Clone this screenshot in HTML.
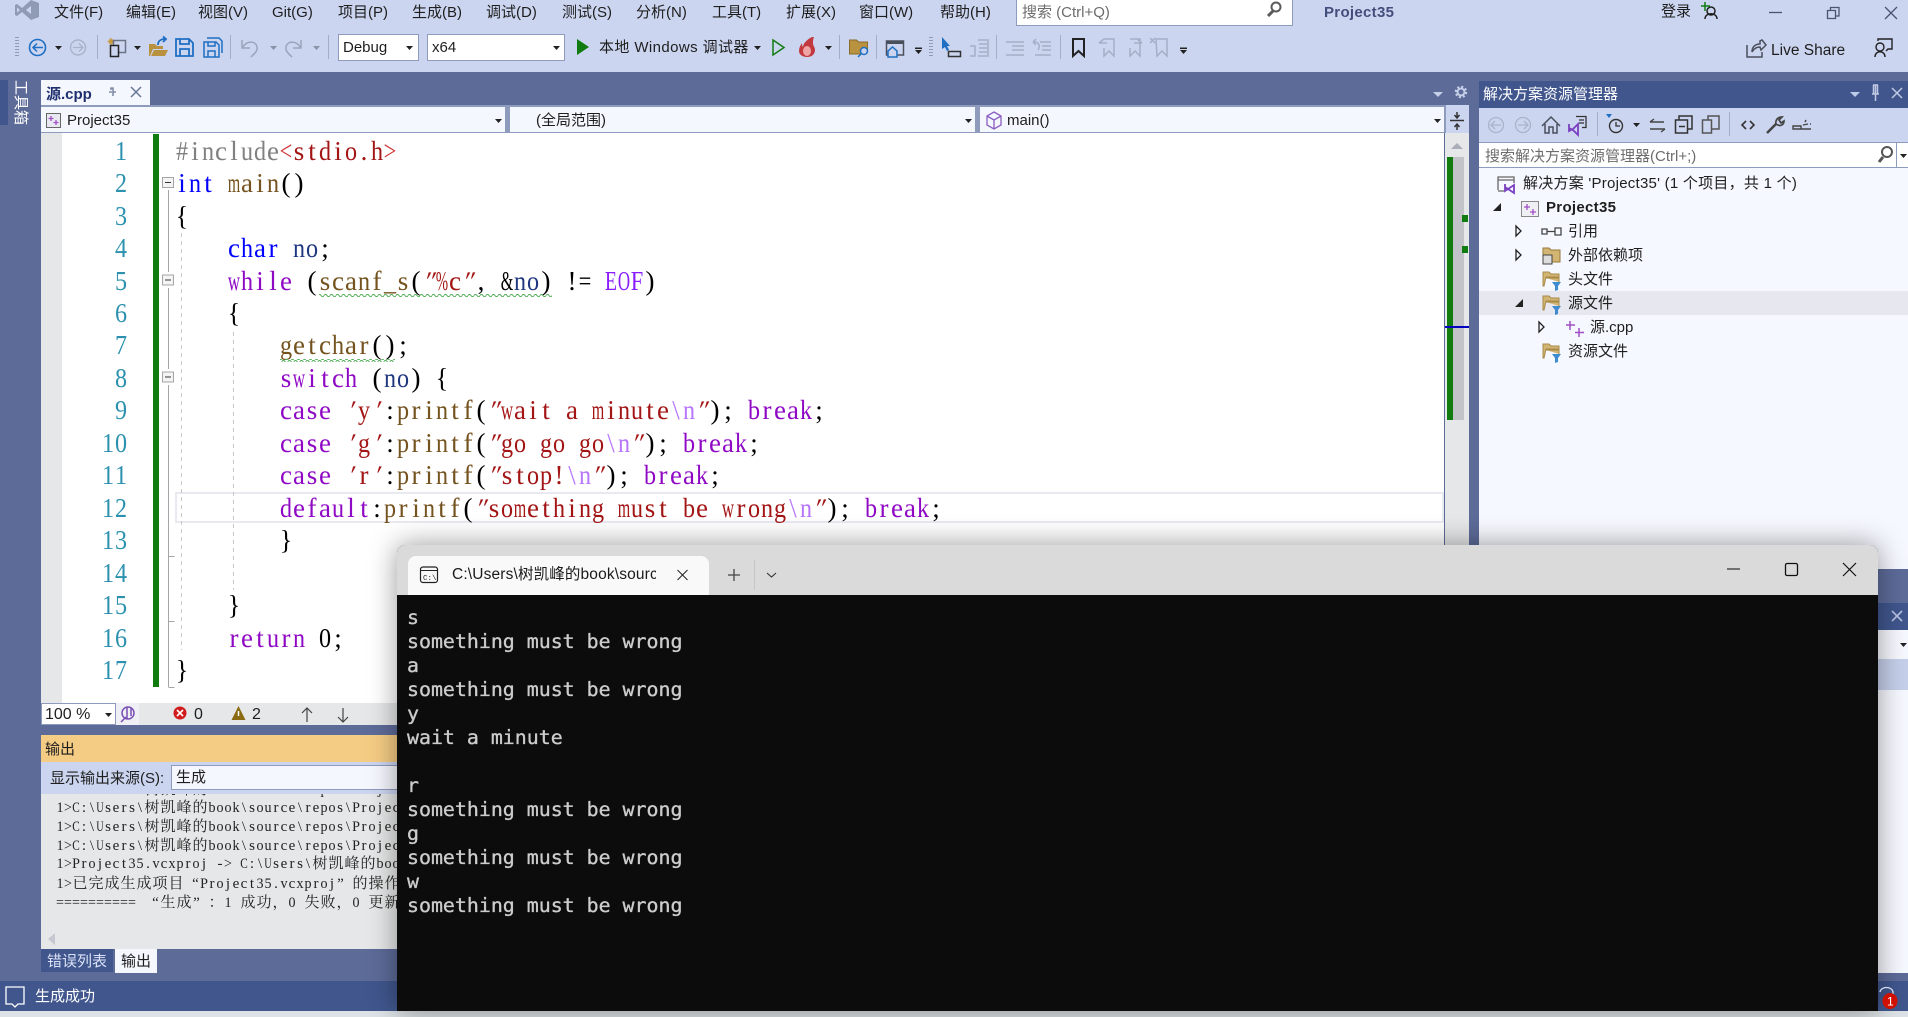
<!DOCTYPE html>
<html lang="zh"><head><meta charset="utf-8"><title>Project35</title>
<style>
html,body{margin:0;padding:0}
body{width:1908px;height:1017px;position:relative;overflow:hidden;background:#5d6b99;font:15px/20px "Liberation Sans","Noto Sans CJK SC",sans-serif;color:#1e1e1e}
.a{position:absolute}
.t{position:absolute;white-space:nowrap;line-height:20px;height:20px}
.code{position:absolute;white-space:pre;left:175.500px;height:32px;line-height:32px;font:27px/32px "Liberation Serif","Noto Serif CJK SC",serif;color:#000}
.ln{position:absolute;white-space:pre;height:32px;font:27px/32px "Liberation Serif",serif;color:#2b91af}
.o{position:absolute;left:56px;white-space:pre;height:19px;font:15px/19px "Liberation Serif","Noto Serif CJK SC",serif;color:#222}
.k{color:#0000ff}.p{color:#8f08c4}.f{color:#74531f}.s{color:#a31515}.e{color:#b776fb}.v{color:#1f377f}.g{color:#808080}.c{color:#8a1bff}.r{color:#d03030}
svg{position:absolute;left:0;top:0}
</style></head><body>

<!-- top bar -->
<div class="a" style="left:0;top:0;width:1908px;height:72px;background:#ccd5f0"></div>
<div class="t" style="left:54px;top:3px">文件(F)</div>
<div class="t" style="left:126px;top:3px">编辑(E)</div>
<div class="t" style="left:198px;top:3px">视图(V)</div>
<div class="t" style="left:272px;top:3px">Git(G)</div>
<div class="t" style="left:338px;top:3px">项目(P)</div>
<div class="t" style="left:412px;top:3px">生成(B)</div>
<div class="t" style="left:486px;top:3px">调试(D)</div>
<div class="t" style="left:562px;top:3px">测试(S)</div>
<div class="t" style="left:636px;top:3px">分析(N)</div>
<div class="t" style="left:712px;top:3px">工具(T)</div>
<div class="t" style="left:786px;top:3px">扩展(X)</div>
<div class="t" style="left:859px;top:3px">窗口(W)</div>
<div class="t" style="left:940px;top:3px">帮助(H)</div>
<div class="a" style="left:1016px;top:-1px;width:275px;height:25px;background:#fff;border:1px solid #8e9bbc"></div>
<div class="t" style="left:1022px;top:3px;color:#6d6d6d">搜索 (Ctrl+Q)</div>
<div class="t" style="left:1324px;top:3px;color:#444e7c;font-weight:bold;letter-spacing:.3px">Project35</div>
<div class="t" style="left:1661px;top:2px">登录</div>
<div class="a" style="left:338px;top:34px;width:79px;height:25px;background:#fff;border:1px solid #8e9bbc"></div>
<div class="t" style="left:343px;top:38px">Debug</div>
<div class="a" style="left:427px;top:34px;width:136px;height:25px;background:#fff;border:1px solid #8e9bbc"></div>
<div class="t" style="left:432px;top:38px">x64</div>
<div class="t" style="left:599px;top:38px;letter-spacing:.4px">本地 Windows 调试器</div>
<div class="t" style="left:1771px;top:41px;font-size:15.500px">Live Share</div>

<!-- tab -->
<div class="a" style="left:0;top:80px;width:8px;height:45px;background:#40568d"></div>
<div class="a" style="left:12px;top:80px;height:46px;width:16px;font-size:15px;line-height:16px;color:#fff;writing-mode:vertical-rl;text-orientation:sideways">工具箱</div>
<div class="a" style="left:41px;top:80px;width:109px;height:26px;background:#f5f7fe"></div>
<div class="t" style="left:46px;top:85px;font-weight:bold;color:#1e2f6f">源.cpp</div>

<!-- nav bar -->
<div class="a" style="left:41px;top:105px;width:1428px;height:28px;background:#8e9bbc"></div>
<div class="a" style="left:41px;top:107px;width:464px;height:25px;background:#f5f7fe"></div>
<div class="a" style="left:510px;top:107px;width:465px;height:25px;background:#f5f7fe"></div>
<div class="a" style="left:980px;top:107px;width:464px;height:25px;background:#f5f7fe"></div>
<div class="a" style="left:1446px;top:105px;width:23px;height:28px;background:#ccd5f0"></div>
<div class="t" style="left:67px;top:111px">Project35</div>
<div class="t" style="left:536px;top:111px">(全局范围)</div>
<div class="t" style="left:1007px;top:111px">main()</div>

<!-- editor -->
<div class="a" style="left:41px;top:133px;width:1403px;height:570px;background:#fff"></div>
<div class="a" style="left:41px;top:133px;width:21px;height:570px;background:#e6e7e8"></div>
<div class="a" style="left:153px;top:134px;width:6px;height:553px;background:#107c10"></div>
<div class="a" style="left:175px;top:492px;width:1265px;height:27px;border:2px solid #e9e9f2"></div>
<div class="a" style="left:1445px;top:133px;width:24px;height:420px;background:#e6e7e8"></div>
<div class="a" style="left:1453px;top:157px;width:11px;height:263px;background:#c2c3c9"></div>
<div class="a" style="left:1447px;top:157px;width:6px;height:263px;background:#107c10"></div>
<div class="a" style="left:1462px;top:215px;width:6px;height:7px;background:#107c10"></div>
<div class="a" style="left:1462px;top:246px;width:6px;height:7px;background:#107c10"></div>
<div class="a" style="left:1445px;top:326px;width:24px;height:2px;background:#0000c0"></div>

<div class="ln m13" style="left:114px;top:135px">1</div>
<div class="ln m13" style="left:114px;top:167px">2</div>
<div class="ln m13" style="left:114px;top:200px">3</div>
<div class="ln m13" style="left:114px;top:232px">4</div>
<div class="ln m13" style="left:114px;top:265px">5</div>
<div class="ln m13" style="left:114px;top:297px">6</div>
<div class="ln m13" style="left:114px;top:329px">7</div>
<div class="ln m13" style="left:114px;top:362px">8</div>
<div class="ln m13" style="left:114px;top:394px">9</div>
<div class="ln m13" style="left:101px;top:427px">10</div>
<div class="ln m13" style="left:101px;top:459px">11</div>
<div class="ln m13" style="left:101px;top:492px">12</div>
<div class="ln m13" style="left:101px;top:524px">13</div>
<div class="ln m13" style="left:101px;top:557px">14</div>
<div class="ln m13" style="left:101px;top:589px">15</div>
<div class="ln m13" style="left:101px;top:622px">16</div>
<div class="ln m13" style="left:101px;top:654px">17</div>

<div class="code m13" style="top:135px"><span class="g">#include</span><span class="r">&lt;</span><span class="s">stdio.h</span><span class="r">&gt;</span></div>
<div class="code m13" style="top:167px"><span class="k">int</span> <span class="f">main</span>()</div>
<div class="code m13" style="top:200px">{</div>
<div class="code m13" style="top:232px">    <span class="k">char</span> <span class="v">no</span>;</div>
<div class="code m13" style="top:265px">    <span class="p">while</span> (<span class="f">scanf_s</span>(<span class="s">"%c"</span>, &amp;<span class="v">no</span>) != <span class="c">EOF</span>)</div>
<div class="code m13" style="top:297px">    {</div>
<div class="code m13" style="top:329px">        <span class="f">getchar</span>();</div>
<div class="code m13" style="top:362px">        <span class="p">switch</span> (<span class="v">no</span>) {</div>
<div class="code m13" style="top:394px">        <span class="p">case</span> <span class="s">'y'</span>:<span class="f">printf</span>(<span class="s">"wait a minute</span><span class="e">\n</span><span class="s">"</span>); <span class="p">break</span>;</div>
<div class="code m13" style="top:427px">        <span class="p">case</span> <span class="s">'g'</span>:<span class="f">printf</span>(<span class="s">"go go go</span><span class="e">\n</span><span class="s">"</span>); <span class="p">break</span>;</div>
<div class="code m13" style="top:459px">        <span class="p">case</span> <span class="s">'r'</span>:<span class="f">printf</span>(<span class="s">"stop!</span><span class="e">\n</span><span class="s">"</span>); <span class="p">break</span>;</div>
<div class="code m13" style="top:492px">        <span class="p">default</span>:<span class="f">printf</span>(<span class="s">"something must be wrong</span><span class="e">\n</span><span class="s">"</span>); <span class="p">break</span>;</div>
<div class="code m13" style="top:524px">        }</div>
<div class="code m13" style="top:589px">    }</div>
<div class="code m13" style="top:622px">    <span class="p">return</span> 0;</div>
<div class="code m13" style="top:654px">}</div>

<!-- editor bottom bar -->
<div class="a" style="left:41px;top:703px;width:1403px;height:22px;background:#e6e7e8"></div>
<div class="a" style="left:41px;top:703px;width:73px;height:20px;background:#fff;border:1px solid #8e9bbc"></div>
<div class="t" style="left:45px;top:705px;font-size:16px">100 %</div>
<div class="a" style="left:116px;top:703px;width:23px;height:22px;background:#eef0f5"></div>
<div class="t" style="left:194px;top:705px;font-size:16px">0</div>
<div class="t" style="left:252px;top:705px;font-size:16px">2</div>

<!-- output panel -->
<div class="a" style="left:41px;top:735px;width:400px;height:27px;background:#f5cc84"></div>
<div class="t" style="left:45px;top:740px">输出</div>
<div class="a" style="left:41px;top:762px;width:400px;height:32px;background:#ccd5f0"></div>
<div class="t" style="left:50px;top:769px">显示输出来源(S):</div>
<div class="a" style="left:171px;top:765px;width:260px;height:23px;background:#f5f7fe;border:1px solid #8e9bbc"></div>
<div class="t" style="left:176px;top:768px">生成</div>
<div class="a" style="left:41px;top:794px;width:400px;height:155px;background:#e6e7e8;overflow:hidden">
<div class="o m8" style="left:15px;top:-13px">1&gt;C:\Users\树凯峰的book\source\repos\Project35</div>
<div class="o m8" style="left:15px;top:5px">1&gt;C:\Users\树凯峰的book\source\repos\Project35</div>
<div class="o m8" style="left:15px;top:24px">1&gt;C:\Users\树凯峰的book\source\repos\Project35</div>
<div class="o m8" style="left:15px;top:43px">1&gt;C:\Users\树凯峰的book\source\repos\Project35</div>
<div class="o m8" style="left:15px;top:61px">1&gt;Project35.vcxproj -&gt; C:\Users\树凯峰的book</div>
<div class="o m8" style="left:15px;top:81px">1&gt;已完成生成项目“Project35.vcxproj”的操作</div>
<div class="o m8" style="left:15px;top:100px">========== “生成”：1 成功，0 失败，0 更新</div>
</div>
<div class="a" style="left:41px;top:949px;width:72px;height:23px;background:#40568d"></div>
<div class="t" style="left:47px;top:952px;color:#dbe2f7">错误列表</div>
<div class="a" style="left:115px;top:949px;width:42px;height:24px;background:#f5f7fe"></div>
<div class="t" style="left:121px;top:952px">输出</div>

<!-- status bar -->
<div class="a" style="left:0;top:981px;width:1908px;height:30px;background:#40568d"></div>
<div class="t" style="left:35px;top:987px;color:#fff">生成成功</div>
<div class="a" style="left:0;top:1011px;width:1908px;height:6px;background:#dce2e5"></div>

<!-- solution explorer -->
<div class="a" style="left:1479px;top:81px;width:429px;height:27px;background:#40568d"></div>
<div class="t" style="left:1483px;top:85px;color:#fff">解决方案资源管理器</div>
<div class="a" style="left:1479px;top:108px;width:429px;height:34px;background:#ccd5f0"></div>
<div class="a" style="left:1479px;top:142px;width:429px;height:26px;background:#fff;border-top:1px solid #8e9bbc;border-bottom:1px solid #8e9bbc;box-sizing:border-box"></div>
<div class="t" style="left:1485px;top:147px;color:#6d6d6d">搜索解决方案资源管理器(Ctrl+;)</div>
<div class="a" style="left:1896px;top:143px;width:1px;height:24px;background:#8e9bbc"></div>
<div class="a" style="left:1479px;top:168px;width:429px;height:401px;background:#f6f8ff"></div>
<div class="a" style="left:1479px;top:291px;width:429px;height:24px;background:#e6e7ef"></div>
<div class="t" style="left:1523px;top:174px;letter-spacing:.25px">解决方案 'Project35' (1 个项目，共 1 个)</div>
<div class="t" style="left:1546px;top:198px;font-weight:bold;letter-spacing:.3px">Project35</div>
<div class="t" style="left:1568px;top:222px">引用</div>
<div class="t" style="left:1568px;top:246px">外部依赖项</div>
<div class="t" style="left:1568px;top:270px">头文件</div>
<div class="t" style="left:1568px;top:294px">源文件</div>
<div class="t" style="left:1590px;top:318px">源.cpp</div>
<div class="t" style="left:1568px;top:342px">资源文件</div>

<!-- lower-right panel peeking out -->
<div class="a" style="left:1878px;top:603px;width:30px;height:27px;background:#40568d"></div>
<div class="a" style="left:1878px;top:630px;width:30px;height:343px;background:#f6f8ff"></div>
<div class="a" style="left:1878px;top:659px;width:30px;height:31px;background:#c5cfea"></div>

<svg width="1908" height="1017" viewBox="0 0 1908 1017" fill="none" style="z-index:2">
<defs><pattern id="w" width="6" height="3" patternUnits="userSpaceOnUse"><path d="M0 1.5Q1.5-.8 3 1.5T6 1.5" stroke="#4fae55" stroke-width="1"/></pattern></defs>
<!-- VS logo -->
<path fill="#8f9bb5" fill-rule="evenodd" d="M31 0l8 3v14l-8 3-9-8-5 4-2-1V5l2-1 5 4zM31 6l-5 4 5 4zM17 7.5v5l3-2.500z"/>
<!-- toolbar grip -->
<path stroke="#8f9ab5" stroke-width="4" stroke-dasharray="1 2" d="M17 37v21"/>
<!-- back/forward -->
<circle cx="37.500" cy="47.500" r="8" stroke="#1e6fc3" stroke-width="1.600"/><path stroke="#1e6fc3" stroke-width="1.500" d="M43 47.500H33M37 43.500l-4 4 4 4"/>
<path fill="#222" d="M55 46h7l-3.500 4z"/>
<circle cx="78" cy="47.500" r="7.500" stroke="#aab3c9" stroke-width="1.400"/><path stroke="#aab3c9" stroke-width="1.300" d="M73 47.500h10M79 43.500l4 4-4 4"/>
<path stroke="#a3adc6" d="M97.500 35v24M230.500 35v24M328.500 35v24M839.500 35v24M876.500 35v24M996.500 35v24M1060.500 35v24"/>
<!-- new project -->
<path stroke="#c79a3c" stroke-width="1.300" d="M111 38v7M107.500 41.500h7M109 39.500l4 4M113 39.500l-4 4"/>
<rect x="113.500" y="40.500" width="12" height="12" stroke="#6b7385" stroke-width="1.500"/><rect x="110.500" y="45.500" width="8" height="11" fill="#ccd5f0" stroke="#222" stroke-width="1.500"/>
<path fill="#222" d="M134 46h7l-3.500 4z"/>
<!-- open folder -->
<path fill="#b8923f" d="M149 56V44h6l2 2h6v3h-10l-3 7zM154 50h14l-3 6h-14z"/><path stroke="#1e6fc3" stroke-width="1.800" d="M158 45c0-4 3-6 7-6M163 36.500l3 2.500-3 3"/>
<!-- save -->
<path stroke="#1e6fc3" stroke-width="1.800" d="M176 39h13l4 4v13h-17zM180 39v5h9v-5M180 56v-7h9v7"/>
<path stroke="#1e6fc3" stroke-width="1.500" d="M207 38h12l3 3v12M204 42h12l3 3v12h-15zM208 42v4h7v-4M208 57v-6h7v6"/>
<!-- undo / redo -->
<path stroke="#9aa3bb" stroke-width="1.500" d="M242 40v8h8M243 47c4-7 13-6 14 0 1 4-3 7-6 10"/>
<path fill="#8a92a8" d="M270 46h7l-3.500 4z"/>
<path stroke="#9aa3bb" stroke-width="1.500" d="M301 40v8h-8M300 47c-4-7-13-6-14 0-1 4 3 7 6 10"/>
<path fill="#8a92a8" d="M313 46h7l-3.500 4z"/>
<path fill="#222" d="M406 46h7l-3.500 4zM553 46h7l-3.500 4z"/>
<path fill="#107c10" d="M577 39l12 8-12 8z"/>
<path fill="#222" d="M754 46h7l-3.500 4z"/>
<path stroke="#107c10" stroke-width="1.500" d="M773 40l11 7.500-11 7.500z"/>
<!-- flame -->
<path fill="#c23a3f" d="M812 37c-6 3-9 7-9 10-1-1-1-3-1-4-2 3-3 5-3 8 0 4 4 6 8 6 5 0 8-3 8-7 0-3-2-4-2-7 0-2 0-4 1-6z"/><ellipse cx="807" cy="51" rx="4" ry="5" fill="#efa4a6"/>
<path fill="#222" d="M825 46h7l-3.500 4z"/>
<!-- folder search -->
<path fill="#b8923f" stroke="#8a6c2a" d="M849.500 54V40h7l2 2h9v7l-6 5z"/><circle cx="864" cy="51" r="3.500" stroke="#1e6fc3" stroke-width="1.500" fill="#ccd5f0"/><path stroke="#1e6fc3" stroke-width="1.500" d="M861 54l-3 3"/>
<!-- window home -->
<rect x="886.500" y="41" width="17" height="14" stroke="#4a4f5c" stroke-width="1.500"/><path fill="#4a4f5c" d="M886 41h18v3h-18z"/><path stroke="#1e6fc3" stroke-width="1.500" fill="#ccd5f0" d="M888 51l4.500-4 4.500 4v6h-9z"/>
<path fill="#222" d="M915 50h7l-3.500 4zM915 47.500h7v1.500h-7zM1180 50h7l-3.500 4zM1180 47.500h7v1.500h-7z"/>
<path stroke="#8f9ab5" stroke-width="4" stroke-dasharray="1 2" d="M931 37v21"/>
<path fill="#1e6fc3" d="M942 37l8 9h-3l2 4-2 1-2-4-3 2z"/><rect x="948.500" y="51.500" width="12" height="5" stroke="#333" stroke-width="1.500"/>
<path stroke="#a5aec6" stroke-width="1.500" d="M970 46h5v10h-5M978 40h10v16h-10M979 44h8M979 48h8M979 52h8"/>
<path stroke="#a5aec6" stroke-width="1.500" d="M1006 42h18M1012 46h12M1012 50h12M1006 55h18"/>
<path stroke="#a5aec6" stroke-width="1.500" d="M1040 42h11M1042 46h9M1042 50h9M1035 55h16M1033 42l3-3M1033 42l3 3M1034 42c6 0 6 5 4 8"/>
<path stroke="#222" stroke-width="2" d="M1073 39h11v17l-5.500-5-5.500 5z"/>
<path stroke="#a5aec6" stroke-width="1.500" d="M1104 39h10v17l-5-5-5 5v-8M1099 43l5-4M1099 43h8"/>
<path stroke="#a5aec6" stroke-width="1.500" d="M1130 39h10v17l-5-5-5 5v-8M1142 43l-5-4M1142 43h-8"/>
<path stroke="#a5aec6" stroke-width="1.500" d="M1156 39h11v17l-5-5-5 5zM1150 38l5 5M1155 38l-5 5"/>
<!-- search magnifier -->
<circle cx="1276" cy="7" r="4.500" stroke="#5a5a5a" stroke-width="2"/><path stroke="#5a5a5a" stroke-width="3" d="M1273 11l-5 5"/>
<!-- title right -->
<circle cx="1711" cy="11" r="4" stroke="#1e1e1e" stroke-width="1.500"/><path stroke="#1e1e1e" stroke-width="1.500" d="M1705 19c0-7 12-7 12 0"/><path stroke="#107c10" stroke-width="1.500" d="M1705 2v9M1701 6h9"/>
<path stroke="#4a5470" stroke-width="1.300" d="M1769 12.500h13"/>
<path stroke="#4a5470" stroke-width="1.300" d="M1827.500 10.500h8v8h-8zM1830.500 10V7.500h8.500v8.500H1836"/>
<path stroke="#4a5470" stroke-width="1.300" d="M1885 7l12 12M1897 7l-12 12"/>
<!-- live share -->
<path stroke="#4a4f5c" stroke-width="1.500" d="M1747 45v12h15v-5M1752 52c0-5 3-8 8-8v-3l2-1 4 5-5 5-1-3c-4 0-6 2-8 5"/>
<circle cx="1880" cy="47" r="4" stroke="#222" stroke-width="1.400"/><path stroke="#222" stroke-width="1.400" d="M1875 57c0-7 10-7 10 0M1878 41v-2h14v10h-4l-2 2"/>
<!-- tab controls -->
<path stroke="#6a7696" stroke-width="1.300" d="M111 90v-2h2v8M112 92h-3M113 92h3"/>
<path stroke="#6a7696" stroke-width="1.500" d="M131 87l10 10M141 87l-10 10"/>
<path fill="#c6cfe8" d="M1433 92h10l-5 5z"/>
<circle cx="1461" cy="92" r="3.500" stroke="#c6cfe8" stroke-width="2"/>
<circle cx="1461" cy="92" r="5" stroke="#c6cfe8" stroke-width="2.500" stroke-dasharray="2 1.930"/>
<!-- nav combos -->
<rect x="46.500" y="113.500" width="14" height="14" fill="#e8e8f0" stroke="#666"/><path stroke="#a14fc5" stroke-width="1.300" d="M51 116v5M48.500 118.500h5M56 120v5M53.500 122.500h5"/>
<path fill="#222" d="M495 119h7l-3.500 4zM965 119h7l-3.500 4zM1434 119h7l-3.500 4z"/>
<path stroke="#8a5dc0" stroke-width="1.300" d="M994 112l7 4v9l-7 4-7-4v-9zM987 116l7 4 7-4M994 120v9"/>
<path stroke="#333" stroke-width="1.500" d="M1450 120.500h14M1457 112v5M1457 124v6M1454.500 115l2.500 3 2.500-3M1454.500 127l2.500-3 2.500 3"/>
<path fill="#a9aeb8" d="M1451 149l6-6 6 6z"/>
<!-- fold margin -->
<path stroke="#a5a5a5" d="M168.500 190v82M168.500 288v81M168.500 385v302M168.500 556.500h6M168.500 621.500h6M168.500 687.500h6"/>
<rect x="162.500" y="177.500" width="11" height="10" fill="#f4f4f4" stroke="#a5a5a5"/><path stroke="#333" d="M165 182.500h6"/>
<rect x="162.500" y="275" width="11" height="10" fill="#f4f4f4" stroke="#a5a5a5"/><path stroke="#333" d="M165 280h6"/>
<rect x="162.500" y="372" width="11" height="10" fill="#f4f4f4" stroke="#a5a5a5"/><path stroke="#333" d="M165 377h6"/>
<path stroke="#c8c8c8" stroke-dasharray="4 4" d="M181.500 233v417M233.500 332v258"/>
<rect x="319" y="294" width="233" height="3" fill="url(#w)"/>
<rect x="280" y="359" width="115" height="3" fill="url(#w)"/>
<!-- editor bottom -->
<path fill="#222" d="M105 713h7l-3.500 4z"/>
<circle cx="128" cy="713" r="6" stroke="#7a4fb5" stroke-width="1.500"/><path stroke="#7a4fb5" stroke-width="1.500" d="M121 722l5-5M127 707v12M131 708v8"/>
<circle cx="180" cy="713" r="6.500" fill="#d01c1c"/><path stroke="#fff" stroke-width="1.600" d="M177 710l6 6M183 710l-6 6"/>
<path fill="#8a6a12" d="M238.500 706l7 14h-14z"/><path stroke="#fff" stroke-width="1.500" d="M238.500 711v5"/>
<path stroke="#444" stroke-width="1.200" d="M307 722v-14M302 713l5-5 5 5M343 708v14M338 717l5 5 5-5"/>
<!-- output -->
<path fill="#c5c8d0" d="M55 933v12l-7-6z"/>
<!-- status comment -->
<path stroke="#fff" stroke-width="1.300" d="M6 987h18v17h-6l-3 3-3-3H6z"/>
<!-- solution explorer icons -->
<path fill="#bccbe8" d="M1850 92h10l-5 5z"/><path stroke="#c0cae4" stroke-width="1.500" d="M1873 85h5M1872 94h7M1875.500 85v16M1873.500 85v9M1877.500 85v9M1892 88l10 10M1902 88l-10 10"/>
<circle cx="1496" cy="125" r="7.500" stroke="#aab3c9" stroke-width="1.300"/><path stroke="#aab3c9" stroke-width="1.300" d="M1501 125h-10M1495 121l-4 4 4 4"/>
<circle cx="1523" cy="125" r="7.500" stroke="#aab3c9" stroke-width="1.300"/><path stroke="#aab3c9" stroke-width="1.300" d="M1518 125h10M1524 121l4 4-4 4"/>
<path stroke="#4a4f5c" stroke-width="1.500" d="M1542 126l9-9 9 9M1545 124v9h4v-6h4v6h4v-9"/>
<path stroke="#7a3fc0" stroke-width="1.800" d="M1569 124v7l4-2 5-5v11l-5-5-4-2"/><path stroke="#333" stroke-width="1.300" d="M1576 116.500h10v11h-4M1579 120h5M1579 123h5"/>
<path stroke="#a3adc6" d="M1597.500 112v24M1729.500 112v24"/>
<path fill="#1e6fc3" d="M1606 114h6l-3 4z"/><circle cx="1616" cy="126" r="6.500" stroke="#333" stroke-width="1.400"/><path stroke="#333" stroke-width="1.300" d="M1616 122v4h4"/><path fill="#222" d="M1633 123h7l-3.500 4z"/>
<path stroke="#444" stroke-width="1.400" d="M1650 122h14M1650 122l4-3M1665 129h-15M1665 129l-4 3"/>
<path stroke="#333" stroke-width="1.500" d="M1675.500 120h12v13h-12zM1679 120v-4h13v13h-4M1679 126.500h6"/>
<path stroke="#555" stroke-width="1.500" d="M1702.500 120h9v13h-9zM1708 120v-4h11v13h-8"/>
<path stroke="#333" stroke-width="1.600" d="M1746 121l-4 4 4 4M1750 121l4 4-4 4"/>
<path stroke="#444" stroke-width="2.500" d="M1767 133l9-9"/><path stroke="#444" stroke-width="1.700" d="M1776 124c-1-4 2-7 6-7l-3 3 2 3 3-2c0 4-4 6-8 3"/>
<path stroke="#444" stroke-width="1.400" d="M1793 126h8v3h-8zM1793 129h18M1803 125l5-1M1806 120l-1 2M1811 124h-1"/>
<circle cx="1887" cy="152" r="5" stroke="#555" stroke-width="2"/><path stroke="#555" stroke-width="3" d="M1883 157l-4 5"/>
<path fill="#222" d="M1900 154h7l-3.500 4z"/>
<!-- tree -->
<path stroke="#666" stroke-width="1.300" d="M1498 190v-13h16v6"/><path stroke="#666" stroke-width="1.300" d="M1498 180h16M1498 191h6"/><path stroke="#7a3fc0" stroke-width="1.800" d="M1505 184v7l3-2 6-4v8l-6-4-3-2"/>
<path fill="#222" d="M1501 203v8h-8z"/>
<rect x="1521.500" y="201.500" width="17" height="15" fill="#efeff4" stroke="#888"/><path stroke="#a14fc5" stroke-width="1.300" d="M1527 204v6M1524 207h6M1533 209v6M1530 212h6"/>
<path stroke="#222" stroke-width="1.300" d="M1516 226l5 5-5 5zM1516 250l5 5-5 5z"/>
<path stroke="#444" stroke-width="1.300" d="M1542 229h5v5h-5zM1547 231.500h8M1555 228h6v7h-6z"/>
<path fill="#d2b573" stroke="#98793a" d="M1543 262v-14h6l2 2h9v12z"/><rect x="1543" y="255" width="9" height="9" fill="#ddd" stroke="#444"/>
<path fill="#d2b573" stroke="#a88a48" d="M1543 286v-14h6l2 2h8v3h-13l-2 9zM1546 278h13v4"/><path fill="#3f8bd0" d="M1552 282h9l-3 4v4l-3 1v-5z"/>
<path fill="#d2b573" stroke="#a88a48" d="M1543 310v-14h6l2 2h8v3h-13l-2 9zM1546 302h13v4"/><path fill="#3f8bd0" d="M1552 306h9l-3 4v4l-3 1v-5z"/>
<path fill="#d2b573" stroke="#a88a48" d="M1543 358v-14h6l2 2h8v3h-13l-2 9zM1546 350h13v4"/><path fill="#3f8bd0" d="M1552 354h9l-3 4v4l-3 1v-5z"/>
<path fill="#222" d="M1523 299v8h-8z"/>
<path stroke="#222" stroke-width="1.300" d="M1539 322l5 5-5 5z"/>
<path stroke="#a14fc5" stroke-width="1.500" d="M1570 321v9M1566 325h9M1579 328v9M1575 332.500h9"/>
<!-- lower right panel controls -->
<path stroke="#b6c1de" stroke-width="1.600" d="M1892 611l10 10M1902 611l-10 10"/>
<path fill="#222" d="M1900 643h7l-3.500 4z"/>
</svg>

<!-- console -->
<div class="a" style="left:397px;top:545px;width:1481px;height:466px;background:#0c0c0c;border-radius:8px 8px 0 0;box-shadow:0 0 28px rgba(0,0,0,.4);z-index:5;overflow:hidden">
  <div class="a" style="left:0;top:0;width:1481px;height:50px;background:#dadada"></div>
  <div class="a" style="left:11px;top:11px;width:301px;height:39px;background:#f9f9f9;border-radius:8px 8px 0 0"></div>
  <div class="t" style="left:55px;top:20px;width:204px;overflow:hidden;font-size:15.500px;letter-spacing:.15px;color:#1a1a1a">C:\Users\树凯峰的book\source\repos</div>
  <svg width="1481" height="50" viewBox="397 545 1481 50" fill="none">
    <rect x="420.500" y="567" width="17" height="15.500" rx="2.500" stroke="#222" stroke-width="1.200"/><path stroke="#222" d="M421 570.500h16"/><text x="423" y="580" font-family="Liberation Mono" font-size="7.500" fill="#222">C:\</text>
    <path stroke="#222" d="M677.500 570l10 10M687.500 570l-10 10"/>
    <path stroke="#444" stroke-width="1.300" d="M728 575h12M734 569v12"/>
    <path stroke="#c6c6c6" d="M754.500 560v30"/>
    <path stroke="#333" stroke-width="1.100" d="M767 573l4.500 4 4.500-4"/>
    <path stroke="#333" stroke-width="1.300" d="M1727 569h13"/>
    <rect x="1785.500" y="563.500" width="12" height="12" rx="1.500" stroke="#111" stroke-width="1.300"/>
    <path stroke="#111" stroke-width="1.200" d="M1843 563l13 13M1856 563l-13 13"/>
  </svg>
  <div class="a" style="left:10px;top:61px;white-space:pre;font:19.900px/24px 'DejaVu Sans Mono','Liberation Mono',monospace;color:#ccc;-webkit-text-stroke:.35px #ccc">s
something must be wrong
a
something must be wrong
y
wait a minute

r
something must be wrong
g
something must be wrong
w
something must be wrong</div>
</div>

<!-- notification -->
<svg width="1908" height="1017" viewBox="0 0 1908 1017" fill="none" style="z-index:6">
<path stroke="#d5dcef" stroke-width="1.300" d="M1880 992c1-6 12-6 13 0v7"/>
<ellipse cx="1890" cy="1001" rx="7.500" ry="8" fill="#d01000"/>
<text x="1887" y="1005.500" font-family="Liberation Sans" font-size="12" fill="#fff">1</text>
</svg>

<script>
(function(){
var list=[];
function wrap(el,w){
  var tw=document.createTreeWalker(el,NodeFilter.SHOW_TEXT),ns=[],n;
  while(n=tw.nextNode())ns.push(n);
  var lh=el.offsetHeight;
  ns.forEach(function(t){
    var f=document.createDocumentFragment();
    Array.from(t.nodeValue).forEach(function(ch){
      var wide=ch.charCodeAt(0)>255;
      var W=wide?w*2:w;
      var c=document.createElement('span');
      c.style.cssText='display:inline-block;position:relative;vertical-align:top;width:'+W+'px;height:'+lh+'px';
      var i=document.createElement('span');
      var l='50%';
      if(ch==='“')l='72%';
      if(ch==='”')l='28%';
      i.style.cssText='position:absolute;top:0;left:'+l+';white-space:pre';
      i.textContent=ch;
      c.appendChild(i);f.appendChild(c);
      list.push({i:i,W:W,ch:ch});
    });
    t.parentNode.replaceChild(f,t);
  });
}
document.querySelectorAll('.m13').forEach(function(e){wrap(e,13)});
document.querySelectorAll('.m8').forEach(function(e){wrap(e,8)});
list.forEach(function(c){
  var i=c.i,m=i.offsetWidth,k=1,lim=c.W-0.5;
  if(m>lim&&m>0)k=lim/m;
  var sk=(c.ch==='"'||c.ch==="'")?' skewX(-22deg)':'';
  i.style.transform='translateX(-50%) scaleX('+k.toFixed(3)+')'+sk;
});
})();
</script>
</body></html>
